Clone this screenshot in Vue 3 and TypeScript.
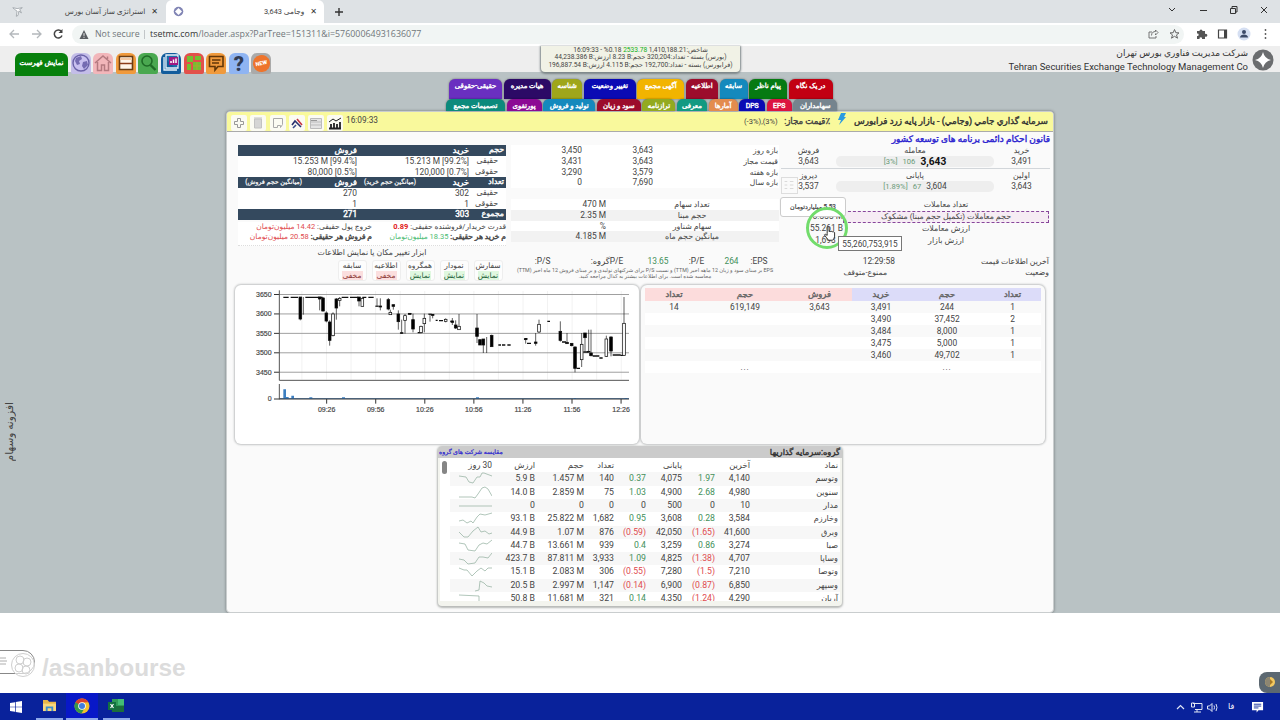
<script setup lang="ts">
interface Tab {
  label: string
  color: string
  width: number
}

interface Company {
  name: string
  last: string
  lastPct: string
  close: string
  closePct: string
  count: string
  volume: string
  value: string
  spark: string
}

// Верхние вкладки меню
const tabsTop: Tab[] = [
  { label: 'حقیقی-حقوقی', color: '#6a2fc0', width: 53 },
  { label: 'هیات مدیره', color: '#2c0a66', width: 47 },
  { label: 'شناسه', color: '#9fa61a', width: 30 },
  { label: 'تغییر وضعیت', color: '#0a0ab4', width: 52 },
  { label: 'آگهی مجمع', color: '#f2b400', width: 47 },
  { label: 'اطلاعیه', color: '#9c0c2c', width: 32 },
  { label: 'سابقه', color: '#1489bd', width: 28 },
  { label: 'پیام ناظر', color: '#067a12', width: 38 },
  { label: 'در یک نگاه', color: '#c20012', width: 44 },
]

const tabsBottom: Tab[] = [
  { label: 'تصمیمات مجمع', color: '#0c8a7c', width: 59 },
  { label: 'پورتفوی', color: '#8c0a94', width: 35 },
  { label: 'تولید و فروش', color: '#1489bd', width: 52 },
  { label: 'سود و زیان', color: '#9c0c2c', width: 44 },
  { label: 'ترازنامه', color: '#93aa20', width: 33 },
  { label: 'معرفی', color: '#129a82', width: 30 },
  { label: 'آمارها', color: '#e38c4e', width: 29 },
  { label: 'DPS', color: '#0a0ab4', width: 26 },
  { label: 'EPS', color: '#dc1440', width: 25 },
  { label: 'سهامداران', color: '#75848e', width: 44 },
]

// Диапазоны цены
const ranges = [
  ['3,450', '3,643', 'بازه روز'],
  ['3,431', '3,643', 'قیمت مجاز'],
  ['3,290', '3,579', 'بازه هفته'],
  ['0', '7,690', 'بازه سال'],
]

const shares = [
  ['470 M', 'تعداد سهام'],
  ['2.35 M', 'حجم مبنا'],
  ['%', 'سهام شناور'],
  ['4.185 M', 'میانگین حجم ماه'],
]

// Физические и юридические лица
const clientRows = [
  { head: true, cells: ['', 'فروش', '', 'خرید', 'حجم'] },
  { head: false, cells: ['', '15.253 M [99.4%]', '', '15.213 M [99.2%]', 'حقیقی'] },
  { head: false, cells: ['', '80,000 [0.5%]', '', '120,000 [0.7%]', 'حقوقی'] },
  { head: true, cells: ['(میانگین حجم فروش)', 'فروش', '(میانگین حجم خرید)', 'خرید', 'تعداد'] },
  { head: false, cells: ['', '270', '', '302', 'حقیقی'] },
  { head: false, cells: ['', '1', '', '1', 'حقوقی'] },
  { head: true, cells: ['', '271', '', '303', 'مجموع'] },
]

const toggles = [
  { name: 'سابقه', on: false },
  { name: 'اطلاعیه', on: false },
  { name: 'همگروه', on: true },
  { name: 'نمودار', on: true },
  { name: 'سفارش', on: true },
]

const orders = [
  ['14', '619,149', '3,643', '3,491', '244', '1'],
  ['', '', '', '3,490', '37,452', '2'],
  ['', '', '', '3,484', '8,000', '1'],
  ['', '', '', '3,475', '5,000', '1'],
  ['', '', '', '3,460', '49,702', '1'],
  ['', '...', '', '', '...', ''],
]

const companies: Company[] = [
  { name: 'وتوسم', last: '4,140', lastPct: '1.97', close: '4,075', closePct: '0.37', count: '140', volume: '1.457 M', value: '5.9 B', spark: '0,4 7,5 10,10 14,11 18,5 21,5 23,1 25,1 33,4' },
  { name: 'سنوین', last: '4,980', lastPct: '2.68', close: '4,900', closePct: '1.03', count: '75', volume: '2.859 M', value: '14.0 B', spark: '0,11 13,11 16,12 19,8 23,2 26,1 29,3 33,10' },
  { name: 'مدار', last: '10', lastPct: '0', close: '500', closePct: '0', count: '0', volume: '0', value: '0', spark: '0,7 33,7' },
  { name: 'وخارزم', last: '3,584', lastPct: '0.28', close: '3,608', closePct: '0.95', count: '1,682', volume: '25.822 M', value: '93.1 B', spark: '0,9 4,8 8,11 12,9 14,11 18,5 21,2 26,3 33,1' },
  { name: 'وبرق', last: '41,600', lastPct: '(1.65)', close: '42,050', closePct: '(0.59)', count: '876', volume: '1.07 M', value: '44.9 B', spark: '0,6 5,11 9,11 14,5 19,1 22,6 26,5 30,8 33,7' },
  { name: 'صبا', last: '3,274', lastPct: '0.86', close: '3,259', closePct: '0.4', count: '939', volume: '13.661 M', value: '44.7 B', spark: '0,4 6,5 9,11 16,12 20,6 24,4 28,5 33,1' },
  { name: 'وساپا', last: '4,707', lastPct: '(1.38)', close: '4,825', closePct: '1.09', count: '3,933', volume: '87.811 M', value: '423.7 B', spark: '0,7 5,8 9,12 16,11 20,5 24,5 29,6 33,1' },
  { name: 'وتوصا', last: '7,210', lastPct: '(1.5)', close: '7,280', closePct: '(0.55)', count: '306', volume: '2.083 M', value: '15.1 B', spark: '0,3 5,5 8,5 13,11 18,6 22,3 26,6 29,3 33,3' },
  { name: 'وسپهر', last: '6,850', lastPct: '(0.87)', close: '6,900', closePct: '(0.14)', count: '1,147', volume: '2.997 M', value: '20.5 B', spark: '16,12 20,11 21,2 25,4 28,7 33,8' },
  { name: 'آریان', last: '4,290', lastPct: '(1.24)', close: '4,350', closePct: '0.14', count: '321', volume: '11.681 M', value: '50.8 B', spark: '0,3 20,4 20,13' },
]

// Свечи: x, high, low, верх тела, низ тела, закрашена
const candles: [number, number, number, number, number, boolean][] = [
  [211, 42, 112, 42, 108, true],
  [220, 42, 95, 42, 42, false],
  [269, 42, 82, 42, 48, true],
  [279, 42, 86, 45, 84, true],
  [289, 85, 118, 90, 114, true],
  [299, 112, 188, 117, 172, true],
  [309, 88, 160, 93, 158, false],
  [319, 45, 110, 48, 75, true],
  [329, 42, 70, 46, 52, false],
  [387, 42, 70, 42, 54, true],
  [397, 44, 70, 46, 70, false],
  [441, 46, 70, 69, 70, true],
  [451, 46, 82, 69, 72, true],
  [475, 45, 82, 50, 78, true],
  [481, 80, 95, 88, 95, false],
  [490, 65, 80, 65, 70, true],
  [505, 82, 140, 93, 116, true],
  [515, 110, 152, 149, 151, true],
  [525, 93, 152, 98, 112, false],
  [539, 91, 94, 91, 94, true],
  [549, 92, 148, 110, 138, true],
  [573, 128, 150, 130, 149, false],
  [583, 92, 148, 106, 122, false],
  [600, 93, 116, 93, 94, true],
  [608, 93, 106, 94, 97, true],
  [647, 106, 118, 109, 115, false],
  [667, 105, 126, 114, 118, true],
  [677, 112, 138, 126, 135, true],
  [687, 93, 140, 130, 140, false],
  [741, 93, 180, 135, 160, true],
  [750, 170, 186, 170, 186, true],
  [760, 168, 210, 168, 186, true],
  [770, 162, 210, 210, 210, false],
  [785, 155, 192, 157, 191, true],
  [887, 166, 182, 167, 170, true],
  [917, 150, 188, 177, 181, true],
  [927, 110, 150, 124, 147, false],
  [991, 115, 176, 145, 172, true],
  [1011, 150, 182, 178, 182, true],
  [1025, 180, 190, 181, 188, true],
  [1035, 190, 268, 192, 256, true],
  [1055, 150, 252, 184, 230, false],
  [1065, 150, 205, 150, 164, true],
  [1076, 140, 210, 205, 207, true],
  [1083, 140, 220, 210, 218, true],
  [1129, 158, 222, 168, 220, false],
  [1143, 160, 220, 162, 204, true],
  [1182, 42, 218, 121, 217, false],
]

const priceTicks = [3650, 3600, 3550, 3500, 3450]
const timeTicks = ['09:26', '09:56', '10:26', '10:56', '11:26', '11:56', '12:26']

const pctClass = (value: string) => {
  if (value.startsWith('(')) return 'neg'
  return value === '0' ? '' : 'pos'
}
</script>

<template>
  <div class="screen">
    <!-- Вкладки браузера -->
    <div class="browser-tabs">
      <div class="browser-tab first">
        <svg class="fav" viewBox="0 0 14 14" width="12" height="12"><path d="M1 2l5 1 6-1-3 2 2 4-3-2-1 5-2 1 1-6-3-2z" fill="#fff" stroke="#8b9298" stroke-width=".8" /></svg>
        <span class="tab-title" dir="rtl">استراتژی ساز آسان بورس</span>
        <span class="tab-x">✕</span>
      </div>
      <div class="browser-tab active">
        <svg class="fav" viewBox="0 0 12 12" width="11" height="11"><circle cx="6" cy="6" r="5.2" fill="#8084b4" /><path d="M6 2.2L9.8 6 6 9.8 2.2 6z" fill="#fff" /></svg>
        <span class="tab-title" dir="rtl">وجامی 3,643</span>
        <span class="tab-x">✕</span>
      </div>
      <svg class="plus" viewBox="0 0 10 10" width="10" height="10"><path d="M5 1v8M1 5h8" stroke="#333" stroke-width="1.4" /></svg>
      <svg class="window-buttons" viewBox="0 0 110 14" width="110" height="14" fill="none" stroke="#333" stroke-width="1">
        <path d="M5 5l3 3 3-3M36 7.500h7M97 4l6 6M103 4l-6 6" />
        <path d="M66.500 5.500h5v5h-5zM68 5V3.500h5V9h-1" />
      </svg>
    </div>

    <div class="toolbar">
      <svg class="nav" viewBox="0 0 64 14" width="64" height="14" fill="none" stroke-width="1.300">
        <path d="M14 7H5M9 3L5 7l4 4M27 7h9M32 3l4 4-4 4" stroke="#b4b8bc" />
        <path d="M56.500 4.500A4 4 0 1 0 57 8.500" stroke="#444" stroke-width="1.500" />
        <path d="M57.500 2v4h-4z" fill="#444" />
      </svg>
      <div class="address">
        <svg viewBox="0 0 10 10" width="10" height="9"><path d="M5 0l5 10H0z" fill="#5a5e62" /><path d="M5 3.500v3M5 7.500v1.200" stroke="#fff" /></svg>
        <span class="not-secure">Not secure</span>
        <span class="bar"></span>
        <span class="url"><b>tsetmc.com</b>/loader.aspx?ParTree=151311&amp;i=57600064931636077</span>
        <svg class="address-icons" viewBox="0 0 34 12" width="34" height="12" fill="none" stroke="#666">
          <path d="M4 4H1v6h7V8M3.500 7.500c0-3 2-4 4-4V2l2.500 2.500L7.500 7V5.500" stroke-width=".9" />
          <path d="M26.500 1.500l1.300 3.200 3.200.2-2.500 2 1 3.300-3-1.900-3 1.900 1-3.300-2.500-2 3.200-.2z" />
        </svg>
      </div>
      <svg class="ext-icons" viewBox="0 0 84 14" width="84" height="14">
        <path d="M6 4h2.500a1.500 1.500 0 1 1 3 0H14v3a1.500 1.500 0 1 1 0 2.500V12h-3a1.300 1.300 0 1 0-2.400 0H6V9a1.300 1.300 0 1 0 0-2.500z" fill="#555" />
        <path d="M27.500 3h8v8h-8z" fill="#fff" stroke="#444" stroke-width="1.200" /><path d="M33 3h3v8h-3z" fill="#444" />
        <circle cx="53" cy="7" r="6.500" fill="#d5dff2" /><circle cx="53" cy="5" r="2" fill="#3c4a68" /><path d="M49 10.500c0-4 8-4 8 0z" fill="#3c4a68" />
        <g fill="#555"><circle cx="74.500" cy="3" r=".9" /><circle cx="74.500" cy="7" r=".9" /><circle cx="74.500" cy="11" r=".9" /></g>
      </svg>
    </div>

    <!-- Шапка сайта -->
    <header class="site-header">
      <div class="tools">
        <div class="list-button strong" dir="rtl">نمایش فهرست</div>
        <div class="tool lav">
          <svg viewBox="0 0 20 20"><circle cx="10" cy="10" r="8" fill="#c9c1f0" stroke="#6a62a8" stroke-width="1.400" /><path d="M5 5l5-2 1 3-3 2 1 3-3 1-2-4zM12 9l4-1 1 4-4 4-2-3z" fill="#756cb2" /></svg>
        </div>
        <div class="tool pink">
          <svg viewBox="0 0 20 20" fill="none" stroke="#b47a80" stroke-width="1.500"><path d="M2 10l8-7 8 7M4.500 9v8.500h4V12h3v5.500h4V9M14.500 6V3.500" /></svg>
        </div>
        <div class="tool orange">
          <svg viewBox="0 0 20 20"><path d="M3.500 3.500h13v13h-13z" fill="#fff4e8" stroke="#6a3d14" stroke-width="1.600" /><path d="M4 6h12" stroke="#f3c9a4" stroke-width="2" /><path d="M4 10.500h12" stroke="#8c3c18" stroke-width="1.500" /></svg>
        </div>
        <div class="tool green">
          <svg viewBox="0 0 20 20" fill="none" stroke="#1f6b26"><circle cx="9" cy="8" r="5" stroke-width="1.600" /><path d="M12.500 12l5 5" stroke-width="2.400" /></svg>
        </div>
        <div class="tool blue">
          <svg viewBox="0 0 20 20"><path d="M5 2h12v13H5zM3 4v13h13" fill="#1d6fab" stroke="#e8f2fa" stroke-width="1.300" /><path d="M8 4h9v8H8z" fill="#a11a82" /><path d="M10 10V8M12.500 10V6.500M15 10V5.500" stroke="#fff" stroke-width="1.500" /></svg>
        </div>
        <div class="tool red">
          <svg viewBox="0 0 20 20"><path d="M3 3h6v6H3zM11 3h6v4h-6zM3 11h4v6H3zM9 9h8v8H9z" fill="#74bf32" /><path d="M9 13h8M13 9v8" stroke="#a8a832" /></svg>
        </div>
        <div class="tool orange">
          <svg viewBox="0 0 20 20" fill="none" stroke="#633708" stroke-width="1.600"><path d="M3.500 3.500h13.500v10h-5L9 17v-3.500H3.500z" /><path d="M6 7h8.500M6 10h7" /></svg>
        </div>
        <div class="tool sky">?</div>
        <div class="tool gray"><span class="new">NEW</span></div>
      </div>
      <div class="index-box">
        <div dir="rtl">شاخص:1,410,188.21 <span class="bright">2533.78</span> 0.18% - 16:09:33</div>
        <div dir="rtl">(بورس) بسته - تعداد:320,204 حجم:<bdi dir="ltr">8.23 B</bdi> ارزش:<bdi dir="ltr">44,238.386 B</bdi></div>
        <div dir="rtl">(فرابورس) بسته - تعداد:192,700 حجم:<bdi dir="ltr">4.115 B</bdi> ارزش:<bdi dir="ltr">196,887.54 B</bdi></div>
      </div>
      <div class="brand">
        <div class="brand-names">
          <div dir="rtl" class="brand-fa">شرکت مدیریت فناوري بورس تهران</div>
          <div class="brand-en">Tehran Securities Exchange Technology Management Co</div>
        </div>
        <svg viewBox="0 0 22 22" width="22" height="22"><circle cx="11" cy="11" r="10.500" fill="#6b6d6f" /><path d="M11 3q1.500 6.500 8 8-6.500 1.500-8 8-1.500-6.500-8-8 6.500-1.500 8-8z" fill="#fff" /></svg>
      </div>
    </header>

    <main class="page">
      <div class="side-label" dir="rtl">افزونه وسهام</div>
      <div class="menu">
        <div class="menu-row top">
          <div v-for="tab in tabsTop" :key="tab.label" class="menu-tab strong" :style="{ width: tab.width + 'px', background: tab.color }">{{ tab.label }}</div>
        </div>
        <div class="menu-row bottom">
          <div v-for="tab in tabsBottom" :key="tab.label" class="menu-tab strong" :style="{ width: tab.width + 'px', background: tab.color }">{{ tab.label }}</div>
        </div>
      </div>

      <section class="panel">
        <div class="panel-title">
          <div class="mini-icons">
            <span class="mini"><svg viewBox="0 0 14 14"><path d="M5.500 2.500h3v3h3v3h-3v3h-3v-3h-3v-3h3z" fill="none" stroke="#999" /></svg></span>
            <span class="mini"><svg viewBox="0 0 14 14"><path d="M3.500 3h7v9h-7zM3 2h8" fill="#d5d5d5" stroke="#c2c2c2" /></svg></span>
            <span class="mini"><svg viewBox="0 0 14 14"><path d="M2.500 2.500h9v6l-2 3v-2h-3v2h-4z" fill="none" stroke="#aaa" /></svg></span>
            <span class="mini"><svg viewBox="0 0 14 14" fill="none" stroke-width="1.600"><path d="M2 9l3-4 3 3 3 3" stroke="#28306e" /><path d="M7 3l5 6" stroke="#c63340" /><path d="M3 12l3-3" stroke="#3a4a8c" /></svg></span>
            <span class="mini"><svg viewBox="0 0 14 14"><path d="M1.500 2.500h11v10h-11zM2 6h10M2 9h10" fill="#e4e4e4" stroke="#bbb" /><path d="M2 4.500h6" stroke="#999" /></svg></span>
            <span class="mini"><svg viewBox="0 0 14 14" stroke="#222" fill="none"><path d="M1 12.500h12M3 12V8M6 12V7M9 12V8M12 12V6" stroke-width="1.800" /><path d="M1 6l4-3 3 2 5-3" /></svg></span>
          </div>
          <span class="clock">16:09:33</span>
          <span class="limits">(-3%),(3%)</span>
          <span class="limits-label strong" dir="rtl">٪قیمت مجاز:</span>
          <svg class="bolt" viewBox="0 0 8 12" width="8" height="12"><path d="M3 0h5L6 4h2L1 12l2-5H0z" fill="#2b9be0" /></svg>
          <span class="instrument strong" dir="rtl">سرمايه گذاري جامي (وجامي) - بازار پایه زرد فرابورس</span>
        </div>

        <div class="info">
          <!-- Покупатели и продавцы -->
          <div class="clients">
            <div class="client-table">
              <div v-for="(row, i) in clientRows" :key="i" class="client-row" :class="{ head: row.head, strong: row.head }">
                <span v-for="(cell, j) in row.cells" :key="j" :class="'c' + j">{{ cell }}</span>
              </div>
            </div>
            <div class="power">
              <div dir="rtl">خروج پول حقیقی: <span class="neg">14.42 میلیون‌تومان</span></div>
              <div dir="rtl">قدرت خریدار/فروشنده حقیقی: <b class="red-text">0.89</b></div>
              <div dir="rtl"><span class="strong">م فروش هر حقیقی:</span> <span class="neg">20.58 میلیون‌تومان</span></div>
              <div dir="rtl"><span class="strong">م خرید هر حقیقی:</span> <span class="bright2">18.35 میلیون‌تومان</span></div>
            </div>
            <div class="tool-caption" dir="rtl">ابزار تغییر مکان یا نمایش اطلاعات</div>
            <div class="toggles">
              <div v-for="t in toggles" :key="t.name" class="toggle">
                <div>{{ t.name }}</div>
                <div :class="t.on ? 'on' : 'off'">{{ t.on ? 'نمایش' : 'مخفی' }}</div>
              </div>
            </div>
          </div>

          <div class="middle">
            <div class="ranges">
              <div v-for="r in ranges" :key="r[2]" class="range-row">
                <span>{{ r[0] }}</span><span>{{ r[1] }}</span><span dir="rtl" class="fa-right">{{ r[2] }}</span>
              </div>
            </div>
            <div class="shares">
              <div v-for="s in shares" :key="s[1]" class="share-row">
                <span>{{ s[0] }}</span><span dir="rtl">{{ s[1] }}</span>
              </div>
            </div>
            <div class="eps">
              <span>:P/S</span><span dir="rtl">P/Eگروه:</span><span class="pos">13.65</span><span>:P/E</span><span class="pos">264</span><span>:EPS</span>
            </div>
            <div class="note" dir="rtl">EPS بر مبنای سود و زیان 12 ماهه اخیر (TTM) و نسبت P/S برای شرکتهای تولیدی و بر مبنای فروش 12 ماه اخیر (TTM)<br />محاسبه شده است. برای اطلاعات بیشتر به کدال مراجعه کنید.</div>
          </div>

          <div class="quote">
            <div class="law strong" dir="rtl">قانون احکام دائمی برنامه های توسعه کشور</div>
            <div class="quote-row fa"><span>فروش</span><span>معامله</span><span>خرید</span></div>
            <div class="quote-row line">
              <span>3,643</span>
              <span class="band"><i class="pos">[3%]</i><i class="pos">106</i><b>3,643</b></span>
              <span>3,491</span>
            </div>
            <div class="quote-row fa second"><span>دیروز</span><span>پایانی</span><span>اولین</span></div>
            <div class="quote-row">
              <span>3,537</span>
              <span class="band"><i class="pos">[1.89%]</i><i class="pos">67</i><i>3,604</i></span>
              <span>3,643</span>
            </div>
            <div class="deals">
              <div class="deal"><span></span><span dir="rtl">تعداد معاملات</span></div>
              <div class="deal suspicious"><span>15.333 M</span><span dir="rtl">حجم معاملات (تکمیل حجم مبنا) مشکوک</span></div>
              <div class="deal"><span>55.261 B</span><span dir="rtl">ارزش معاملات</span></div>
              <div class="deal"><span>1,693 B</span><span dir="rtl">ارزش بازار</span></div>
            </div>
            <div class="state"><span>12:29:58</span><span dir="rtl">آخرین اطلاعات قیمت</span></div>
            <div class="state"><span class="stopped" dir="rtl">ممنوع-متوقف</span><span dir="rtl">وضعیت</span></div>
            <div class="grid-handle"><svg viewBox="0 0 16 16" width="14" height="14" fill="none" stroke="#d5d5d5"><path d="M3 4h3M9 4h4M3 8h3M9 8h4M3 12h3M9 12h4" /></svg></div>
            <div class="tip-toman strong" dir="rtl">5.53 میلیاردتومان</div>
            <div class="ring"></div>
            <div class="tip-value">55,260,753,915</div>
            <svg class="hand" viewBox="0 0 14 17" width="13" height="16"><path d="M4.500 9V2.200q1-1.500 2 0V7q1-1 2 0 1-.8 2 .3 1.200-.5 2 .7v4q0 3-2.500 4.300H6Q4 14 1.500 10.500q.5-1.500 3 .5z" fill="#fff" stroke="#222" stroke-width="1" /></svg>
          </div>
        </div>

        <div class="cards">
          <!-- График цены -->
          <div class="card chart">
            <svg viewBox="15 6 1212 477" width="404" height="159">
              <g stroke="#f2f2f2" stroke-width="3">
                <path v-for="i in 14" :key="i" :d="`M${142 + i * 73.700} 24V290`" />
              </g>
              <g v-for="(p, i) in priceTicks" :key="p">
                <path :d="`M148 ${34.500 + i * 58.300}H1197`" stroke="#8d8d8d" stroke-width="2.500" />
                <path :d="`M132 ${34.500 + i * 58.300}h16`" stroke="#333" stroke-width="3" />
                <text x="125" :y="42 + i * 58.300" text-anchor="end">{{ p }}</text>
              </g>
              <path d="M148 22V292H1197M148 303V349" fill="none" stroke="#555" stroke-width="3" />
              <path d="M132 348H1197" stroke="#333" stroke-width="3" />
              <text x="125" y="355" text-anchor="end">0</text>
              <g v-for="(t, i) in timeTicks" :key="t">
                <path :d="`M${290 + i * 147.200} 348v14`" stroke="#333" stroke-width="3" />
                <text :x="290 + i * 147.200" y="388" text-anchor="middle">{{ t }}</text>
              </g>
              <g fill="#3d7fc1">
                <path d="M160 319h8v29h-8zM168 342h8v6h-8zM184 338h8v10h-8zM238 343h9v5h-9zM336 343h9v5h-9zM738 343h9v5h-9zM1032 345h6v3h-6zM1184 345h8v3h-8z" />
                <path d="M150 346h1047v2H150z" fill="#33506f" />
              </g>
              <path d="M160 43h16M182 43h22M226 43h52M335 43h20M360 43h25M397 43h12M415 43h16M534 92h10M563 149h12M604 95h8M617 112h6M627 113h12M661 115h6M805 186h8M816 186h10M832 186h10M884 167h8M891 181h12M952 115h8M996 177h12M1040 256h10M1060 207h14M1088 219h20M1108 225h10M1148 216h24M1172 217h8" stroke="#111" stroke-width="4" />
              <g stroke="#111">
                <g v-for="(c, i) in candles" :key="i">
                  <path :d="`M${c[0]} ${c[1]}V${c[2]}`" stroke-width="2" />
                  <rect :x="c[0] - 4" :y="c[3]" width="8" :height="c[4] - c[3]" :fill="c[5] ? '#000' : '#fff'" stroke-width="2.200" />
                </g>
              </g>
            </svg>
          </div>

          <div class="card book">
            <div class="book-row book-head strong">
              <span class="sell">تعداد</span><span class="sell">حجم</span><span class="sell">فروش</span><span>خرید</span><span>حجم</span><span>تعداد</span>
            </div>
            <div v-for="(o, i) in orders" :key="i" class="book-row" :class="{ more: i === orders.length - 1 }">
              <span v-for="(cell, j) in o" :key="j">{{ cell }}</span>
            </div>
          </div>
        </div>

        <!-- Компании группы -->
        <div class="group">
          <div class="group-title">
            <span class="compare strong" dir="rtl">مقایسه شرکت های گروه</span>
            <span class="strong" dir="rtl">گروه:سرمايه گذاريها</span>
          </div>
          <div class="group-body">
            <div class="thumb"></div>
            <div class="group-row group-head">
              <span dir="rtl">30 روز</span><span>ارزش</span><span>حجم</span><span>تعداد</span><span></span><span>پایانی</span><span></span><span>آخرین</span><span>نماد</span>
            </div>
            <div v-for="c in companies" :key="c.name" class="group-row">
              <svg viewBox="0 0 33 13" width="33" height="13"><polyline :points="c.spark" fill="none" stroke="#8fae9c" stroke-width=".7" /></svg>
              <span>{{ c.value }}</span>
              <span>{{ c.volume }}</span>
              <span>{{ c.count }}</span>
              <span :class="pctClass(c.closePct)">{{ c.closePct }}</span>
              <span>{{ c.close }}</span>
              <span :class="pctClass(c.lastPct)">{{ c.lastPct }}</span>
              <span>{{ c.last }}</span>
              <span dir="rtl" class="name">{{ c.name }}</span>
            </div>
          </div>
        </div>
      </section>
    </main>

    <div class="below">
      <div class="pill"></div>
      <svg class="swirl" viewBox="0 0 26 28" width="26" height="28" fill="none" stroke="#cfcfcf"><circle cx="13" cy="14" r="11.500" fill="#fff" fill-opacity=".6" /><circle cx="10" cy="9" r="4" /><circle cx="17" cy="11" r="4" /><circle cx="9" cy="17" r="4" /><circle cx="16" cy="19" r="4" /></svg>
      <svg class="lines" viewBox="0 0 7 8" width="7" height="8"><path d="M0 1h6M0 4h7M0 7h6" stroke="#999" stroke-width=".8" /></svg>
      <span class="watermark">/asanbourse</span>
      <div class="theme"><svg viewBox="0 0 12 12" width="12" height="12"><circle cx="6" cy="6" r="5" fill="#f2c860" /><path d="M6 1a5 5 0 0 0 0 10z" fill="#8d8672" /><path d="M6 3v6l3-3z" fill="#a87924" /></svg></div>
    </div>

    <footer class="taskbar">
      <div class="task"><svg viewBox="0 0 12 12" width="12" height="12" fill="#fff"><path d="M0 2l5-.8v4.500H0zM5.700 1L12 0v5.700H5.700zM0 6.300h5v4.500L0 10zM5.700 6.300H12V12l-6.300-1z" /></svg></div>
      <div class="task open"><svg viewBox="0 0 16 14" width="15" height="13"><path d="M1 1h5l1.500 2H15v10H1z" fill="#e8b64a" /><path d="M1 5h14v8H1z" fill="#f8d77c" /><path d="M4 8h8v5h-2v-3H6v3H4z" fill="#3b8fd0" /></svg></div>
      <div class="task open current"><svg viewBox="0 0 16 16" width="16" height="16"><circle cx="8" cy="8" r="7.500" fill="#f2c12e" /><path d="M1.500 4.200A7.500 7.500 0 0 1 14.500 4.300L8 4.500 5 9.500z" fill="#d8402f" /><path d="M1.500 4.200A7.500 7.500 0 0 0 7.500 15.500L10.500 10z" fill="#34984b" /><circle cx="8" cy="8" r="3.800" fill="#fff" /><circle cx="8" cy="8" r="3" fill="#3f7de0" /></svg></div>
      <div class="task open"><svg viewBox="0 0 16 14" width="16" height="14"><path d="M4 0h12v13H4z" fill="#2f9b58" /><path d="M10 0h6v6h-6z" fill="#43bd76" /><path d="M4 7h12v6H4z" fill="#1b6e3c" /><path d="M0 3h8v8H0z" fill="#12713f" /><path d="M2.500 5l3 4M5.500 5l-3 4" stroke="#fff" stroke-width="1.200" /></svg></div>
      <svg class="tray" viewBox="0 0 50 14" width="50" height="14" fill="none" stroke="#dfe6f5">
        <path d="M7 9l3.500-3.500L14 9" stroke-width="1.200" />
        <path d="M23 3.500h9v6h-7M27 10v2M24 12h7M21.500 3v4h3V3z" />
        <path d="M37.500 6h2l2.500-2.500v8L39.500 9h-2zM44 5.500q1 2 0 4M46 4q2 3.500 0 7" />
      </svg>
      <span class="lang">فا</span>
      <svg class="notice" viewBox="0 0 13 13" width="12" height="12"><path d="M0 1h12v9H7l-2 2.500V10H0z" fill="#fff" /><path d="M2 3.500h8M2 5.500h8M2 7.500h5" stroke="#1a34a0" /></svg>
    </footer>
  </div>
</template>

<style>
body {
  margin: 0;
  overflow: hidden;
}
</style>

<style scoped>
.screen {
  position: relative;
  display: flex;
  flex-direction: column;
  width: 1280px;
  height: 720px;
  overflow: hidden;
  background: #fff;
  color: #444;
  font-family: Roboto, 'DejaVu Sans', sans-serif;
  font-size: 8.4px;
  line-height: 11px;
}

.screen * {
  box-sizing: border-box;
  white-space: nowrap;
}

/* Утолщение без смены начертания */
.strong { -webkit-text-stroke: 0.4px currentColor; }

.pos { color: #43905a; }
.neg { color: #e04a4e; }
.red-text { color: #e02020; }
.bright { color: #10b020; }
.bright2 { color: #4cbc74; }

/* Браузер */
.browser-tabs {
  display: flex;
  align-items: center;
  height: 23px;
  background: #dee2e5;
}

.browser-tab {
  display: flex;
  align-items: center;
  width: 166px;
  height: 23px;
  padding: 0 8px 0 12px;
  font-size: 7.4px;
}

.browser-tab.active {
  width: 158px;
  padding: 0 7px 0 7px;
  background: #fff;
  border-radius: 6px 6px 0 0;
}

.tab-title {
  flex: 1;
  margin-right: 6px;
  direction: rtl;
  text-align: right;
}

.tab-x { font-size: 8px; color: #333; }
.plus { margin-left: 10px; }
.window-buttons { margin-left: auto; margin-right: 6px; margin-top: -4px; }

.toolbar {
  display: flex;
  align-items: center;
  height: 23px;
  background: #fff;
}

.nav { margin-left: 5px; }

.address {
  display: flex;
  align-items: center;
  width: 1112px;
  height: 19px;
  margin-left: 3px;
  padding: 0 2px 0 7px;
  border-radius: 10px;
  background: #f1f5f4;
  font-family: 'Open Sans', sans-serif;
  font-size: 8.8px;
}

.not-secure { margin-left: 6px; width: 46px; color: #70757a; }
.bar { width: 1px; height: 9px; margin: 0 5px 0 3px; background: #c2c6c8; }
.url { color: #70757a; font-size: 8.88px; }
.url b { font-weight: 400; color: #333; }
.address-icons { margin-left: auto; }
.ext-icons { margin-left: 7px; }

/* Шапка */
.site-header {
  position: relative;
  display: flex;
  align-items: flex-start;
  height: 26px;
  background: #eee;
  z-index: 2;
}

.tools {
  display: flex;
  gap: 2.6px;
  width: 541px;
  padding: 7px 0 0 15px;
}

.list-button {
  width: 53px;
  height: 23px;
  border-radius: 6px 6px 0 0;
  background: #07800c;
  color: #fff;
  font-size: 7px;
  line-height: 20px;
  text-align: center;
}

.tool {
  width: 20px;
  height: 21px;
  border-radius: 6px 6px 2px 2px;
  color: #303b54;
  font-size: 20px;
  font-weight: 900;
  line-height: 22px;
  text-align: center;
}

.tool svg { width: 20px; height: 20px; }
.lav { background: #c3bde8; }
.pink { background: #f2b6ba; }
.orange { background: #f09a3c; }
.green { background: #4aa850; }
.blue { background: #125c9c; }
.red { background: #e2504a; }
.sky { background: #8fb4f2; }
.gray { background: #aaa; }

.new {
  display: block;
  width: 17px;
  height: 17px;
  margin: 2px auto;
  border-radius: 50%;
  background: #ee742c;
  color: #fff;
  font-size: 5.500px;
  line-height: 16px;
  transform: rotate(-12deg);
}

.index-box {
  width: 199px;
  height: 26px;
  padding-top: 1px;
  border-radius: 0 0 4px 4px;
  box-shadow: 0 1px 2px 1px #7d8789;
  background: #f1f2e6;
  font-size: 6.6px;
  line-height: 7.500px;
  text-align: center;
}

.brand {
  display: flex;
  gap: 4px;
  margin-left: auto;
  padding: 1px 6px 0 0;
  color: #333;
}

.brand > svg { margin-top: 2px; }
.brand-names { text-align: right; }
.brand-fa { font-size: 9px; line-height: 12px; }
.brand-en { font-size: 9.500px; line-height: 15px; }

/* Страница */
.page {
  position: relative;
  height: 541px;
  background: #b9c2c4;
}

.side-label {
  position: absolute;
  left: 4px;
  top: 330px;
  writing-mode: vertical-rl;
  transform: rotate(180deg);
  font-size: 10.700px;
  line-height: 12px;
}

.menu {
  display: flex;
  flex-direction: column;
  height: 39px;
  padding-top: 7px;
}

.menu-row {
  display: flex;
  gap: 1.600px;
}

.menu-row.top { margin-left: 449px; height: 20px; }
.menu-row.bottom { margin-left: 446px; height: 12px; }

.menu-tab {
  flex: none;
  height: 20px;
  overflow: hidden;
  border-radius: 6px 6px 0 0;
  box-shadow: 0 0 2px rgba(0, 0, 0, 0.5);
  color: #fff;
  font-size: 6.900px;
  line-height: 14px;
  text-align: center;
}

.bottom .menu-tab { height: 12px; }

.panel {
  display: flex;
  flex-direction: column;
  width: 828px;
  height: 502px;
  margin-left: 226px;
  border: 1px solid #c9cdce;
  border-radius: 4px;
  box-shadow: 0 0 3px rgba(0, 0, 0, 0.4);
  background: #fafafa;
  overflow: hidden;
}

.panel-title {
  display: flex;
  align-items: center;
  height: 20px;
  padding: 0 5px 0 4px;
  border-bottom: 1px solid #aaa;
  background: #f9f99c;
  flex: none;
}

.mini-icons { display: flex; gap: 3.300px; width: 115px; padding-top: 3px; }
.mini { width: 16px; height: 16px; background: #fbfbf3; border-radius: 2px; }
.mini svg { display: block; width: 14px; height: 14px; margin: 1px; }
.clock { width: 398px; font-size: 8.300px; margin-top: -2px; }
.limits { width: 36px; font-size: 7.600px; }
.limits-label { width: 50px; font-size: 8.600px; text-align: right; }
.bolt { margin: -5px 0 0 8px; }
.instrument { margin-left: auto; color: #333; font-size: 8.800px; }

.info {
  display: flex;
  height: 153px;
  padding: 1px 0 0 11px;
  flex: none;
}

/* Таблица клиентов */
.clients { width: 268px; margin-right: 5px; padding-top: 12.500px; }

.client-row {
  display: grid;
  grid-template-columns: 66px 53px 61px 51px 36px;
  height: 10.700px;
  background: #fff;
  text-align: right;
  line-height: 10.700px;
}

.client-row span { display: flex; justify-content: flex-end; }
.client-row .c4 { padding-right: 7px; font-size: 7.800px; }
.client-row.head { background: #34495e; color: #fff; font-size: 8.200px; }
.client-row.head .c4 { padding-right: 1px; }
.client-row.head .c0, .client-row.head .c2 { font-size: 6.400px; padding-right: 2px; -webkit-text-stroke-width: 0.2px; }

.power {
  display: grid;
  grid-template-columns: 134px 134px;
  margin-top: 2px;
  padding-bottom: 3px;
  border-bottom: 1px dotted #ddd;
  background: #fff;
  font-size: 7.500px;
  line-height: 10px;
}

.tool-caption { text-align: center; font-size: 7.800px; line-height: 13px; }

.toggles { display: flex; justify-content: center; gap: 5px; margin: 1px 0 0 96px; }

.toggle {
  width: 29px;
  height: 21px;
  border: 1px solid #eee;
  border-radius: 3px;
  background: #fdfdfd;
  font-size: 7.500px;
  line-height: 9.500px;
  text-align: center;
}

.on { background: #e0f8e0; color: #24613a; margin: 0 3px; }
.off { background: #fbdede; color: #8c3434; margin: 0 3px; }

/* Диапазоны и объёмы */
.middle { width: 268px; margin-right: 2px; padding-top: 12.500px; }
.ranges { background: #fff; }

.range-row {
  display: grid;
  grid-template-columns: 71px 71px 125px;
  height: 10.700px;
  text-align: right;
}

.fa-right { font-size: 7.600px; }

.shares { margin-top: 11px; }

.share-row {
  display: grid;
  grid-template-columns: 95px 172px;
  height: 10.800px;
  background: #fff;
}

.share-row:nth-child(2n) { background: #f2f2f2; }
.share-row span:first-child { text-align: right; }
.share-row span:last-child { text-align: center; font-size: 7.900px; }

.eps {
  display: grid;
  grid-template-columns: 63px 66px 36px 41px 29px 26px;
  margin-top: 14px;
  text-align: center;
}

.note { font-size: 5.300px; line-height: 6px; text-align: center; color: #666; }

/* Котировка */
.quote { position: relative; width: 269px; padding-top: 1px; }
.law { color: #2a22cf; font-size: 8.950px; text-align: right; line-height: 11px; height: 11px; }

.quote-row {
  display: grid;
  grid-template-columns: 55px 158px 55px;
  height: 11px;
  text-align: center;
}

.quote-row.fa { font-size: 7.900px; }
.quote-row.line { border-bottom: 1px solid #d2d6da; height: 13px; }
.quote-row.second { margin-top: 1px; }

.band {
  display: flex;
  justify-content: center;
  align-items: center;
  gap: 5px;
  height: 11px;
  border-radius: 5px;
  background: #eee;
}

.band i { font-style: normal; }
.band .pos { color: #6a9a78; font-size: 7.600px; }
.band b { font-size: 10.200px; color: #111; }

.deals { margin-top: 7.500px; }

.deal {
  display: grid;
  grid-template-columns: 62px 206px;
  height: 11.800px;
  line-height: 11.800px;
}

.deal span:first-child { text-align: right; }
.deal span:last-child { text-align: center; font-size: 7.900px; }

.suspicious > span:last-child {
  border: 1.500px dashed #87459b;
  background: #f6ecf4;
  line-height: 10px;
}

.state {
  display: grid;
  grid-template-columns: 114px 154px;
  height: 11px;
}

.deals + .state { margin-top: 10px; }
.state span:first-child { text-align: right; }
.state span:last-child { text-align: right; font-size: 7.700px; }
.state .stopped { padding-right: 8px; font-size: 7.700px; }

.grid-handle { position: absolute; left: 0; top: 44px; width: 17px; height: 17px; border: 1px solid #ddd; background: #fafafa; }
.tip-toman { position: absolute; left: -1px; top: 64px; width: 66px; height: 20px; border: 1px solid #ccc; border-radius: 3px; background: #fff; font-size: 6.300px; line-height: 19px; text-align: center; -webkit-text-stroke-width: 0.2px; }
.ring { position: absolute; left: 25px; top: 74px; width: 42px; height: 42px; border: 3px solid #72dc6c; border-radius: 50%; }
.tip-value { position: absolute; left: 57px; top: 103px; width: 64px; height: 15px; border: 1px solid #777; background: #fff; font-size: 8.200px; line-height: 14px; text-align: center; }
.hand { position: absolute; left: 42px; top: 92px; }

/* Карточки */
.cards { display: flex; gap: 2px; padding-left: 8px; flex: none; }

.card {
  width: 404px;
  height: 159px;
  border-radius: 6px;
  box-shadow: 0 0 2px 1px #c2c4c5;
  overflow: hidden;
  background: #fff;
}

.chart text { fill: #444; stroke: #444; stroke-width: 0.5; font-family: 'Liberation Sans', sans-serif; font-size: 21px; }
.book { padding: 3px 4px 0; background: #fafafa; }

.book-row {
  display: grid;
  grid-template-columns: 58px 84px 65px 58px 74px 57px;
  height: 12px;
  line-height: 12px;
  text-align: center;
  background: #fff;
}

.book-row:nth-child(2n) { background: #f9f9f9; }
.book-row.more { letter-spacing: 0.8px; background: #fff; }
.book-row.book-head { height: 13px; background: #dcdcf9; font-size: 8.500px; line-height: 13px; color: #666; }
.book-head .sell { background: #fcdcdc; }

/* Группа */
.group {
  width: 404px;
  height: 160px;
  margin: 2px 0 0 211px;
  border-radius: 4px;
  box-shadow: 0 1px 2px 1px #b8bab8;
  background: #f3f4ee;
  overflow: hidden;
}

.group-title {
  display: flex;
  justify-content: space-between;
  height: 12px;
  padding: 0 2px 0 1px;
  background: #cbcbcb;
  color: #333;
  font-size: 8.400px;
  line-height: 12px;
}

.compare { color: #2a22cf; font-size: 6.200px; -webkit-text-stroke-width: 0.2px; }

.group-body {
  position: relative;
  height: 143px;
  margin: 0 2px;
  overflow: hidden;
  background: #fff;
}

.thumb { position: absolute; left: 2px; top: 3px; width: 5px; height: 13px; border-radius: 3px; background: #858585; }

.group-row {
  display: grid;
  grid-template-columns: 33px 43px 49px 30px 32px 36px 33px 35px 88px;
  height: 13.300px;
  margin-left: 10px;
  padding-left: 9px;
  background: #fff;
  font-size: 8.700px;
  line-height: 13.300px;
  text-align: right;
}

.group-row:nth-child(2n + 1) { background: #f7f7f7; }
.group-row .name { font-size: 8.100px; }
.group-row.group-head { height: 14.600px; line-height: 15.500px; }
.group-head span { font-size: 8.400px; }

/* Нижняя часть */
.below { position: relative; height: 81px; background: #fff; }
.pill { position: absolute; left: -4px; top: 37px; width: 39px; height: 24px; border: 1px solid #888; border-radius: 0 12px 12px 0; }
.swirl { position: absolute; left: 10px; top: 38px; }
.lines { position: absolute; left: 0; top: 44px; }
.watermark { position: absolute; left: 42px; top: 41px; color: #dcdcdc; font-family: 'Liberation Sans', sans-serif; font-size: 24.400px; font-weight: 700; line-height: 28px; }
.theme { position: absolute; right: 0; top: 59px; width: 21px; height: 21px; padding: 4px 5px; border-radius: 8px 0 0 8px; background: #5c6871; }

.taskbar {
  display: flex;
  align-items: center;
  height: 27px;
  background: #09229b;
}

.task { display: flex; justify-content: center; align-items: center; width: 32px; height: 27px; }
.task.open { width: 27px; margin: 0 1.500px 0 4px; border-bottom: 2px solid #8fa9ea; }
.task.current { width: 32px; margin: 0 1px; background: #0818c8; }
.tray { margin-left: auto; margin-right: 8px; }
.lang { width: 10px; color: #fff; font-size: 8px; }
.notice { margin: 0 16px 0 14px; }
</style>
